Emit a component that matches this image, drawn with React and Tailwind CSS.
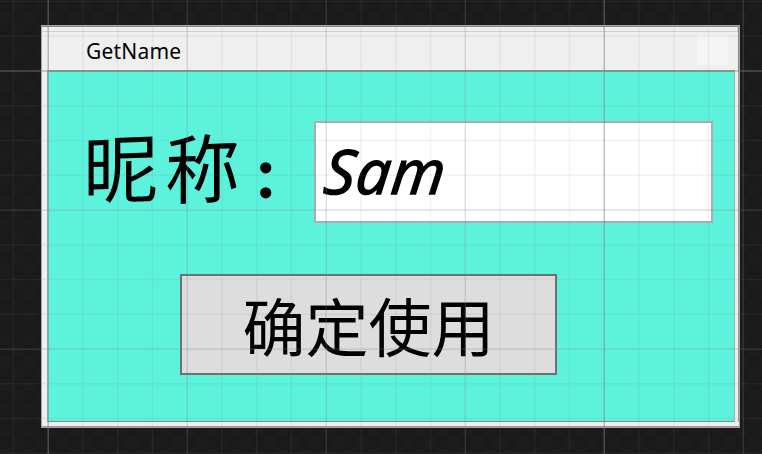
const columns = Array.from({ length: 22 }, (_, i) => ({ pos: 13.5 + i * 34.75, step: i - 1 }));
const rows = Array.from({ length: 14 }, (_, i) => ({ pos: 1.6 + i * 34.75, step: i - 2 }));

function lineStyle(step) {
  if (step % 16 === 0) return { stroke: "#808080", strokeOpacity: 0.5, strokeWidth: 1.5 };
  if (step % 4 === 0) return { stroke: "#808080", strokeOpacity: 0.3, strokeWidth: 1.2 };
  return { stroke: "#808080", strokeOpacity: 0.1, strokeWidth: 1.5 };
}

function GridOverlay() {
  return (
    <svg className="pointer-events-none absolute inset-0" width="762" height="454">
      {columns.map((c) => (
        <line key={c.step} x1={c.pos} x2={c.pos} y1="0" y2="454" {...lineStyle(c.step)} />
      ))}
      {rows.map((r) => (
        <line key={r.step} x1="0" x2="762" y1={r.pos} y2={r.pos} {...lineStyle(r.step)} />
      ))}
    </svg>
  );
}

export default function App() {
  return (
    <div className="relative h-[454px] w-[762px] overflow-hidden bg-[#1b1b1b] bg-[repeating-conic-gradient(#1c1c1c_0_25%,#1a1a1a_0_50%)] bg-[length:23px_23px] pt-[25px] pl-[41px] font-['Noto_Sans','Noto_Sans_CJK_SC',sans-serif] text-black">
      <div className="flex h-[403px] w-[699px] flex-col border border-[#a5a5a5] bg-[#efefef]">
        <div className="flex h-[44px] shrink-0 flex-col border-t border-r border-[#888]">
          <div className="h-[5px] shrink-0 border-r border-b border-[#cfcfcf]" />
          <div className="flex flex-1 items-start justify-between pr-[10px] pl-[44px]">
            <span className="mt-[4px] text-[21px] leading-[30px] tracking-[0.2px]">GetName</span>
            <div className="mt-[3px] h-[30px] w-[31px] bg-[#f5f5f5]" />
          </div>
        </div>
        <div className="flex h-[352px] shrink-0 border-r border-[#999] pr-[3px] pl-[5px]">
          <div className="flex w-[688px] flex-col border border-t-2 border-[#aaa] border-t-[#70a8a1] border-b-[#888] bg-[#5cf2dc]">
            <div className="flex h-[151px] items-start pt-[49px] pl-[37px]">
              <label className="flex h-[102px] w-[229px] shrink-0 items-center whitespace-nowrap">
                <span className="-mt-[8px] -ml-[2px] w-[82px] shrink-0 -skew-y-2 text-[75px] leading-[100px] font-normal">昵</span>
                <span className="-mt-[8px] w-[82px] shrink-0 -skew-y-2 text-[75px] leading-[100px] font-normal">称</span>
                <span className="mt-[5px] ml-[6px] w-[45px] font-['Noto_Sans_CJK_SC',sans-serif] text-[51px] leading-[80px] font-bold [-webkit-text-stroke:1.5px_black]">
                  ：
                </span>
              </label>
              <div className="flex h-[102px] w-[399px] shrink-0 items-center border-2 border-[#a9adb4] bg-white pl-[9px]">
                <span className="-mt-[3px] origin-left -skew-x-6 font-['Open_Sans',sans-serif] text-[61px] leading-[90px] font-medium tracking-[1px] italic [-webkit-text-stroke:1.5px_black]">
                  Sam
                </span>
              </div>
            </div>
            <button className="mt-[51px] ml-[132px] flex h-[101px] w-[377px] items-center justify-center border-2 border-[#707070] bg-[#dddddd] pb-[1px] font-['Noto_Sans_CJK_SC',sans-serif] text-[63px] leading-[90px]">
              确定使用
            </button>
          </div>
        </div>
        <div className="flex-1 border-b border-[#999]" />
      </div>
      <GridOverlay />
    </div>
  );
}
